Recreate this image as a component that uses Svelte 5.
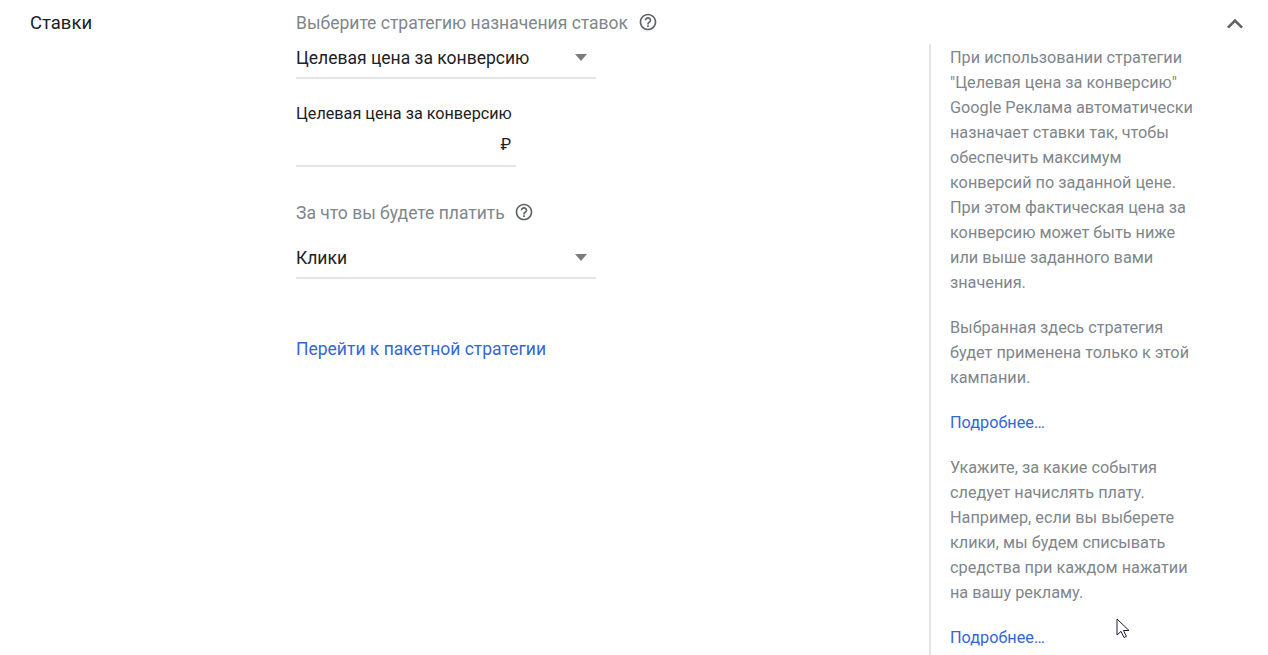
<script lang="ts">
	const helpBlocks = [
		{
			paragraphs: [
				'При использовании стратегии "Целевая цена за конверсию" Google Реклама автоматически назначает ставки так, чтобы обеспечить максимум конверсий по заданной цене. При этом фактическая цена за конверсию может быть ниже или выше заданного вами значения.',
				'Выбранная здесь стратегия будет применена только к этой кампании.'
			]
		},
		{
			paragraphs: [
				'Укажите, за какие события следует начислять плату. Например, если вы выберете клики, мы будем списывать средства при каждом нажатии на вашу рекламу.'
			]
		}
	];
</script>

{#snippet helpIcon()}
	<svg class="help-icon" viewBox="0 0 24 24" width="20" height="20" aria-hidden="true">
		<path
			d="M11 18h2v-2h-2v2zm1-16C6.48 2 2 6.48 2 12s4.48 10 10 10 10-4.48 10-10S17.52 2 12 2zm0 18c-4.41 0-8-3.59-8-8s3.59-8 8-8 8 3.59 8 8-3.59 8-8 8zm0-14c-2.21 0-4 1.79-4 4h2c0-1.1.9-2 2-2s2 .9 2 2c0 2-3 1.75-3 5h2c0-2.25 3-2.5 3-5 0-2.21-1.79-4-4-4z"
		/>
	</svg>
{/snippet}

{#snippet dropdown(value: string)}
	<div class="dropdown">
		<span>{value}</span>
		<i class="caret"></i>
	</div>
{/snippet}

<div class="page">
	<h2 class="section-title">Ставки</h2>

	<div class="main">
		<div class="question first">
			<span>Выберите стратегию назначения ставок</span>
			{@render helpIcon()}
		</div>
		{@render dropdown('Целевая цена за конверсию')}

		<label class="field-label" for="target-cpa">Целевая цена за конверсию</label>
		<div class="money-input">
			<input id="target-cpa" type="text" />
			<span class="currency">₽</span>
		</div>

		<div class="question second">
			<span>За что вы будете платить</span>
			{@render helpIcon()}
		</div>
		{@render dropdown('Клики')}

		<a class="portfolio-link" href="#portfolio">Перейти к пакетной стратегии</a>
	</div>

	<aside class="help">
		{#each helpBlocks as block}
			{#each block.paragraphs as text}
				<p>{text}</p>
			{/each}
			<a href="#more">Подробнее…</a>
		{/each}
	</aside>

	<button class="collapse" aria-label="Свернуть">
		<svg viewBox="0 0 24 24" width="32" height="32" aria-hidden="true">
			<path d="M7.41 15.41 12 10.83l4.59 4.58L18 14l-6-6-6 6z" />
		</svg>
	</button>

	<svg class="cursor" viewBox="0 0 14 21" width="14" height="21" aria-hidden="true">
		<path d="M1 1v16l4-3.6 3 6.1 2.4-1.1-2.9-5.9H13z" />
	</svg>
</div>

<style>
	:global(body) {
		background: #fff;
	}

	.page {
		position: relative;
		display: flex;
		align-items: flex-start;
		height: 655px;
		overflow: hidden;
		font-family: Roboto, sans-serif;
		color: #202124;
	}

	.section-title {
		flex: none;
		width: 266px;
		margin: 0;
		padding: 12px 0 0 30px;
		font-size: 18.5px;
		line-height: 22px;
		font-weight: 400;
	}

	.main {
		flex: none;
		width: 633px;
		display: flex;
		flex-direction: column;
		align-items: flex-start;
	}

	.question {
		display: flex;
		align-items: center;
		gap: 9.5px;
		font-size: 17.5px;
		line-height: 24px;
		color: #80868b;
	}

	.question.first {
		margin-top: 11px;
	}

	.question.second {
		margin-top: 34px;
		margin-bottom: 10px;
	}

	.help-icon {
		margin-bottom: 2px;
		fill: #5f6368;
	}

	.dropdown {
		display: flex;
		align-items: center;
		justify-content: space-between;
		box-sizing: border-box;
		width: 300px;
		height: 44px;
		padding: 3px 9px 0 0;
		border-bottom: 2px solid #e4e4e4;
		font-size: 17.5px;
	}

	.caret {
		width: 0;
		height: 0;
		border-left: 6px solid transparent;
		border-right: 6px solid transparent;
		border-top: 7px solid #80787f;
	}

	.field-label {
		margin-top: 25px;
		font-size: 16.2px;
		line-height: 20px;
	}

	.money-input {
		display: flex;
		align-items: center;
		box-sizing: border-box;
		width: 220px;
		height: 43px;
		padding: 0 5px 0 0;
		border-bottom: 2px solid #e4e4e4;
	}

	.money-input input {
		flex: 1;
		min-width: 0;
		border: 0;
		outline: 0;
		padding: 0;
		background: none;
	}

	.currency {
		font-size: 16px;
	}

	.portfolio-link {
		margin-top: 58px;
		font-size: 17.5px;
		line-height: 24px;
		color: #3367d6;
		text-decoration: none;
	}

	.help {
		flex: none;
		box-sizing: border-box;
		width: 270px;
		height: 620px;
		margin-top: 44px;
		padding: 1px 1px 0 19px;
		border-left: 2px solid #e4e4e4;
		font-size: 16.25px;
		line-height: 25px;
		color: #80868b;
	}

	.help p {
		margin: 0 0 20px;
	}

	.help a {
		display: block;
		margin-bottom: 20px;
		color: #3367d6;
		text-decoration: none;
	}

	.collapse {
		position: absolute;
		top: 8px;
		right: 17px;
		padding: 0;
		border: 0;
		background: none;
		line-height: 0;
	}

	.collapse svg {
		fill: #5f6368;
	}

	.cursor {
		position: absolute;
		left: 1116px;
		top: 618px;
		fill: #fff;
		stroke: #1c1c3c;
		stroke-width: 1;
	}
</style>
